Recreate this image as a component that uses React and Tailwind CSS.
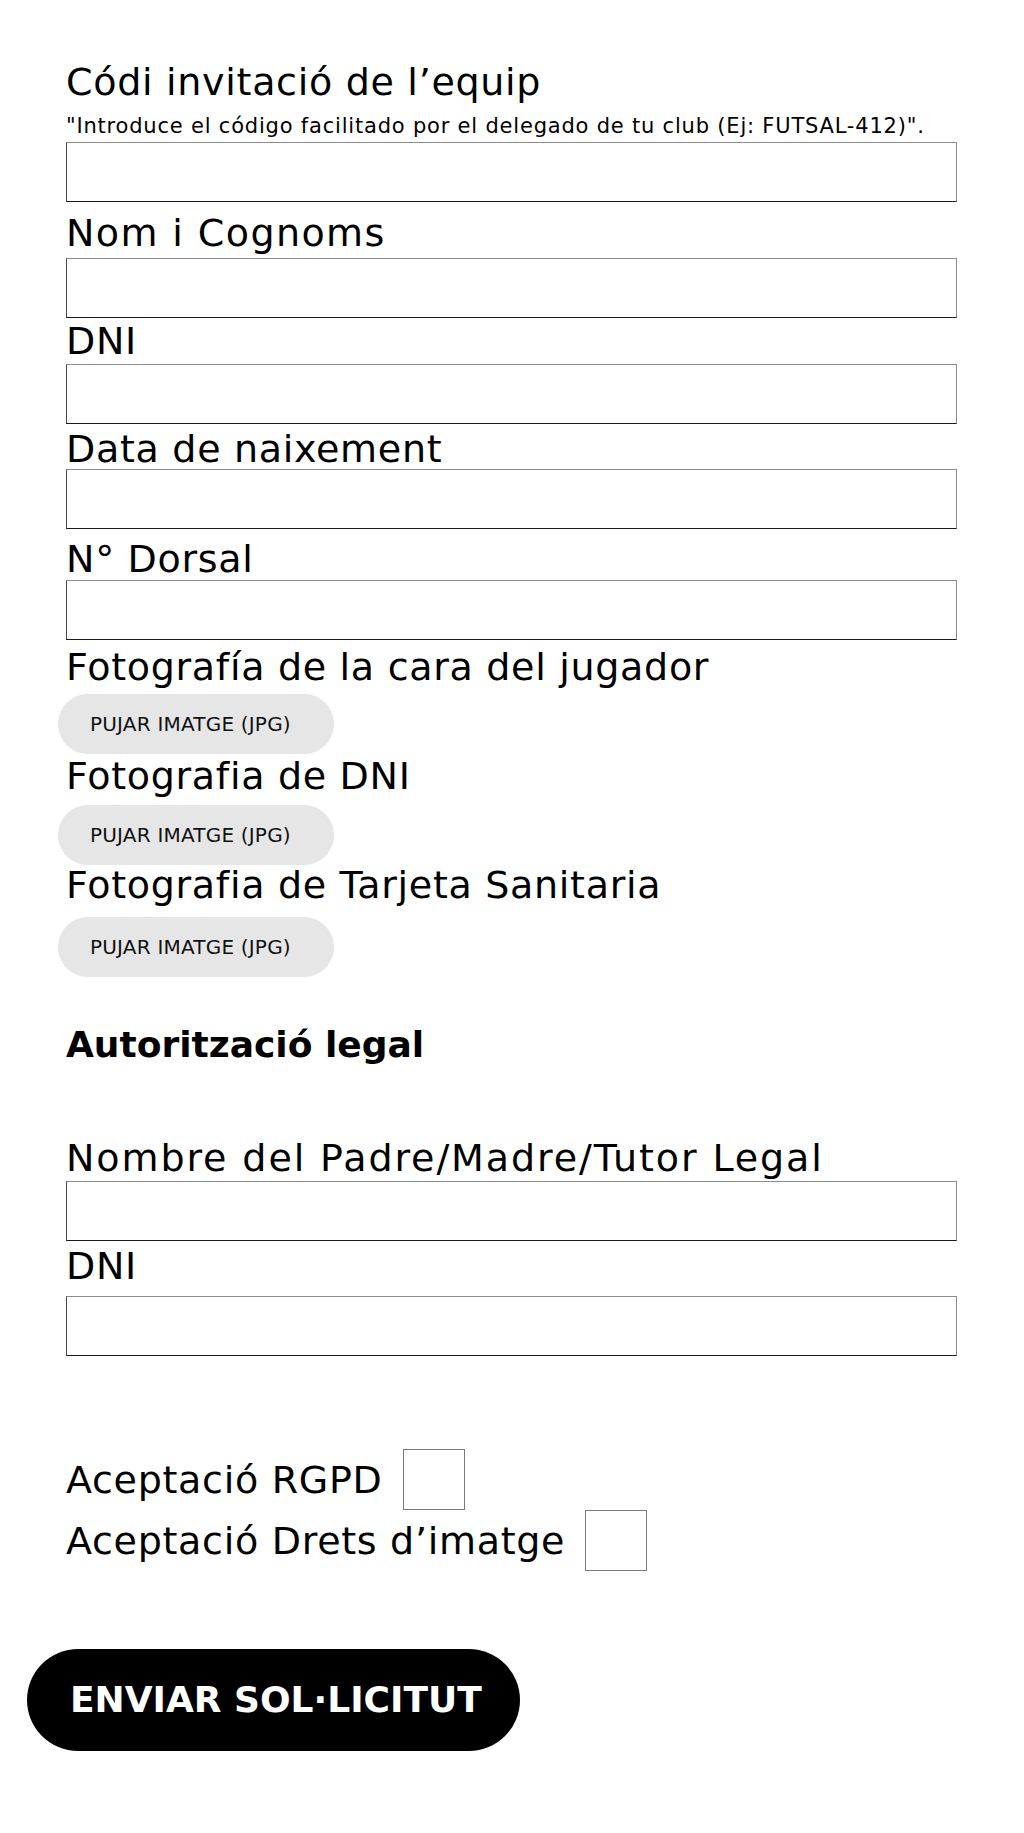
import React from "react";

function Label({ children, className = "" }) {
  return (
    <div className={"text-[38px] leading-[40px] tracking-[0.7px] text-black whitespace-nowrap " + className}>
      {children}
    </div>
  );
}

function Field({ className = "" }) {
  return (
    <div
      className={
        "h-[60px] w-full border border-[#8c8c8c] border-l-[#4a4a4a] border-b-[#1a1a1a] bg-white " +
        className
      }
    />
  );
}

function Upload({ className = "" }) {
  return (
    <div
      className={
        "-ml-2 flex h-[60px] w-[276px] items-center rounded-full bg-[#e6e6e6] pl-8 text-[20px] tracking-[0.2px] text-[#111] " +
        className
      }
    >
      PUJAR IMATGE (JPG)
    </div>
  );
}

export default function App() {
  return (
    <div className="min-h-screen bg-white font-['DejaVu_Sans',sans-serif] text-black">
      <div className="flex flex-col pl-[66px] pr-[67px] pt-[62px] pb-[86px]">
        <Label>Códi invitació de l’equip</Label>
        <div className="mt-[12px] text-[21px] leading-[24px] tracking-[0.8px] whitespace-nowrap">
          "Introduce el código facilitado por el delegado de tu club (Ej: FUTSAL-412)".
        </div>
        <Field className="mt-[4px]" />

        <Label className="mt-[11px] tracking-[1.4px]">Nom i Cognoms</Label>
        <Field className="mt-[5px]" />

        <Label className="mt-[3px]">DNI</Label>
        <Field className="mt-[3px]" />

        <Label className="mt-[5px]">Data de naixement</Label>
        <Field className="mt-0" />

        <Label className="mt-[10px]">N° Dorsal</Label>
        <Field className="mt-[1px]" />

        <Label className="mt-[7px]">Fotografía de la cara del jugador</Label>
        <Upload className="mt-[7px]" />

        <Label className="mt-[2px]">Fotografia de DNI</Label>
        <Upload className="mt-[9px]" />

        <Label className="mt-0">Fotografia de Tarjeta Sanitaria</Label>
        <Upload className="mt-[12px]" />

        <div className="mt-[48px] text-[36px] leading-[40px] font-bold whitespace-nowrap">
          Autorització legal
        </div>

        <Label className="mt-[73px] tracking-[1.9px]">Nombre del Padre/Madre/Tutor Legal</Label>
        <Field className="mt-[3px]" />

        <Label className="mt-[5px]">DNI</Label>
        <Field className="mt-[10px]" />

        <div className="mt-[93px] flex flex-col">
          <div className="flex items-center gap-5">
            <Label>Aceptació RGPD</Label>
            <div className="h-[61px] w-[62px] border border-[#7a7a7a] bg-white" />
          </div>
          <div className="flex items-center gap-5">
            <Label>Aceptació Drets d’imatge</Label>
            <div className="h-[61px] w-[62px] border border-[#7a7a7a] bg-white" />
          </div>
        </div>

        <div className="mt-[78px] -ml-[39px] flex h-[102px] w-[493px] items-center rounded-full bg-black pl-[43px] text-[36px] font-bold text-white whitespace-nowrap">
          ENVIAR SOL·LICITUT
        </div>
      </div>
    </div>
  );
}
